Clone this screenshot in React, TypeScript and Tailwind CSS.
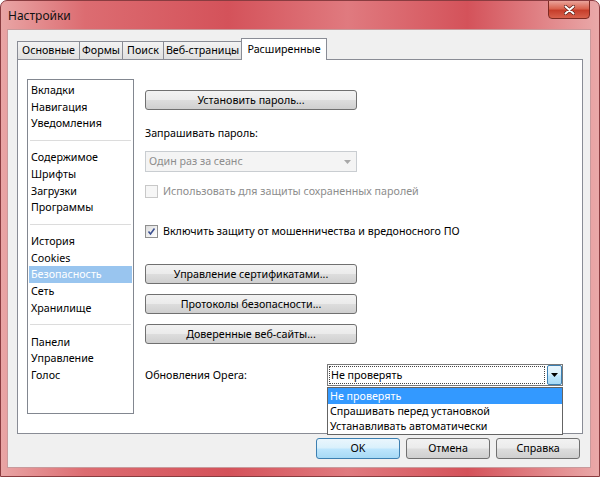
import React from 'react';

const font = { fontFamily: '"Noto Sans", "Open Sans", sans-serif' };

const tabs = [
  { label: 'Основные', w: 'w-[63px]' },
  { label: 'Формы', w: 'w-[44px]' },
  { label: 'Поиск', w: 'w-[42px]' },
  { label: 'Веб-страницы', w: 'w-[79px]' },
];

const groups = [
  ['Вкладки', 'Навигация', 'Уведомления'],
  ['Содержимое', 'Шрифты', 'Загрузки', 'Программы'],
  ['История', 'Cookies', 'Безопасность', 'Сеть', 'Хранилище'],
  ['Панели', 'Управление', 'Голос'],
];

const Button = ({ children, className = '' }: { children: React.ReactNode; className?: string }) => (
  <div
    className={`h-[20px] w-[212px] flex items-center justify-center rounded-[3px] border border-[#707070] bg-[linear-gradient(#f2f2f2_0%,#ebebeb_48%,#dddddd_52%,#cfcfcf_100%)] text-black ${className}`}
  >
    {children}
  </div>
);

const CheckMark = () => (
  <svg width="9" height="9" viewBox="0 0 9 9">
    <path d="M1.5 4.5 L3.5 7 L7.5 1.5" fill="none" stroke="#3d5192" strokeWidth="1.6" />
  </svg>
);

export default function App() {
  return (
    <div
      style={font}
      className="w-[600px] h-[477px] flex flex-col rounded-t-[7px] border border-[#8a3c40] bg-[linear-gradient(90deg,#e9a5a5_0%,#dc6c71_14%,#d4525a_38%,#e07a7f_58%,#d4525a_78%,#eaa9a9_100%)] overflow-hidden"
    >
      {/* title bar */}
      <div className="h-[28px] flex items-start justify-between pl-[7px] pr-[9px]">
        <span className="mt-[6px] text-[12px] text-[#111]">Настройки</span>
        <div className="w-[42px] h-[19px] -mt-px flex items-center justify-center rounded-b-[4px] border border-[#7e2a22] bg-[linear-gradient(#eaa39a_0%,#d9634f_45%,#c63e2b_55%,#d8604c_100%)]">
          <svg width="11" height="10" viewBox="0 0 11 10">
            <path d="M1.5 1.5 L9.5 8.5 M9.5 1.5 L1.5 8.5" stroke="#5a1a14" strokeWidth="3.4" strokeLinecap="round" />
            <path d="M1.5 1.5 L9.5 8.5 M9.5 1.5 L1.5 8.5" stroke="#ffffff" strokeWidth="2" strokeLinecap="round" />
          </svg>
        </div>
      </div>

      {/* client area */}
      <div className="ml-[6px] mr-[8px] h-[439px] flex flex-col bg-[#f0f0f0] border border-[#c89a9c] pl-[9px] pt-[7px] text-[10.7px]">
        {/* tabs */}
        <div className="flex items-end h-[22px] text-black">
          {tabs.map(t => (
            <div
              key={t.label}
              className={`${t.w} h-[18px] flex items-center justify-center border border-b-0 border-[#898c95] -mr-px bg-[linear-gradient(#f3f3f3,#e0e0e0)]`}
            >
              {t.label}
            </div>
          ))}
          <div className="w-[86px] h-[22px] flex items-center justify-center border border-b-0 border-[#898c95] bg-white -mb-px relative z-10">
            Расширенные
          </div>
        </div>

        {/* tab panel */}
        <div className="w-[566px] h-[375px] bg-white border border-[#898c95] flex pl-[9px] pt-[19px] text-black">
          {/* list */}
          <div className="w-[107px] h-[335px] border border-[#828790] pt-[2px] px-px flex flex-col">
            {groups.map((g, gi) => (
              <React.Fragment key={gi}>
                {gi > 0 && (
                  <div className="h-[17.4px] flex items-center px-[1px]">
                    <div className="w-full h-px bg-[#dcdcdc]" />
                  </div>
                )}
                {g.map(item => (
                  <div
                    key={item}
                    className={`h-[16.6px] flex items-center pl-[2px] ${item === 'Безопасность' ? 'bg-[#99c5ef] text-white' : ''}`}
                  >
                    {item}
                  </div>
                ))}
              </React.Fragment>
            ))}
          </div>

          {/* right column */}
          <div className="ml-[11px] pt-[11px] flex flex-col">
            <Button>Установить пароль...</Button>
            <div className="mt-[15px] h-[16px] flex items-center">Запрашивать пароль:</div>
            <div className="mt-[10px] w-[212px] h-[21px] flex items-center justify-between border border-[#c9cdd1] bg-[#f4f4f4] pl-[3px] pr-[5px] text-[#8d8d8d]">
              <span>Один раз за сеанс</span>
              <svg width="7" height="4" viewBox="0 0 7 4">
                <path d="M0 0 L7 0 L3.5 4 Z" fill="#a8a8a8" />
              </svg>
            </div>
            <div className="mt-[11px] h-[16px] flex items-center text-[#8d8d8d]">
              <div className="w-[13px] h-[13px] border border-[#c8c8c8] bg-[#f6f6f6] mr-[5px]" />
              Использовать для защиты сохраненных паролей
            </div>
            <div className="mt-[24px] h-[16px] flex items-center">
              <div className="w-[13px] h-[13px] border border-[#8f8f8f] bg-[linear-gradient(135deg,#dcdcdc,#ffffff)] mr-[5px] flex items-center justify-center">
                <CheckMark />
              </div>
              Включить защиту от мошенничества и вредоносного ПО
            </div>
            <Button className="mt-[25px]">Управление сертификатами...</Button>
            <Button className="mt-[10px]">Протоколы безопасности...</Button>
            <Button className="mt-[10px]">Доверенные веб-сайты...</Button>

            <div className="mt-[20px] h-[22px] flex items-center">
              <span className="w-[182px]">Обновления Opera:</span>
              <div className="relative w-[236px] h-[22px] flex items-center border border-[#7a7a7a] bg-white">
                <div className="flex-1 h-[18px] ml-[1px] mr-[2px] flex items-center border border-dotted border-[#444] pl-[1px]">
                  Не проверять
                </div>
                <div className="w-[15px] h-[20px] flex items-center justify-center border border-[#3c7fb1] bg-[linear-gradient(#eaf6fd_0%,#d9f0fc_45%,#bee6fd_55%,#a7d9f5_100%)] rounded-[2px]">
                  <svg width="7" height="4" viewBox="0 0 7 4">
                    <path d="M0 0 L7 0 L3.5 4 Z" fill="#000" />
                  </svg>
                </div>
                {/* open dropdown list */}
                <div className="absolute left-[-1px] top-[22px] w-[236px] h-[48px] border border-[#646464] bg-white z-20 flex flex-col">
                  <div className="h-[16px] flex items-center pl-[2px] bg-[#3399ff] text-white">Не проверять</div>
                  <div className="h-[15px] flex items-center pl-[2px]">Спрашивать перед установкой</div>
                  <div className="h-[15px] flex items-center pl-[2px]">Устанавливать автоматически</div>
                </div>
              </div>
            </div>
          </div>
        </div>

        {/* bottom buttons */}
        <div className="mt-[4px] flex justify-end gap-[6px] pr-[10px]">
          <div className="w-[84px] h-[21px] flex items-center justify-center rounded-[3px] border border-[#3c7fb1] bg-[linear-gradient(#eaf6fd_0%,#d9f0fc_48%,#bee6fd_52%,#a7d9f5_100%)]">
            OK
          </div>
          <div className="w-[84px] h-[21px] flex items-center justify-center rounded-[3px] border border-[#707070] bg-[linear-gradient(#f2f2f2_0%,#ebebeb_48%,#dddddd_52%,#cfcfcf_100%)]">
            Отмена
          </div>
          <div className="w-[84px] h-[21px] flex items-center justify-center rounded-[3px] border border-[#707070] bg-[linear-gradient(#f2f2f2_0%,#ebebeb_48%,#dddddd_52%,#cfcfcf_100%)]">
            Справка
          </div>
        </div>
      </div>
    </div>
  );
}
